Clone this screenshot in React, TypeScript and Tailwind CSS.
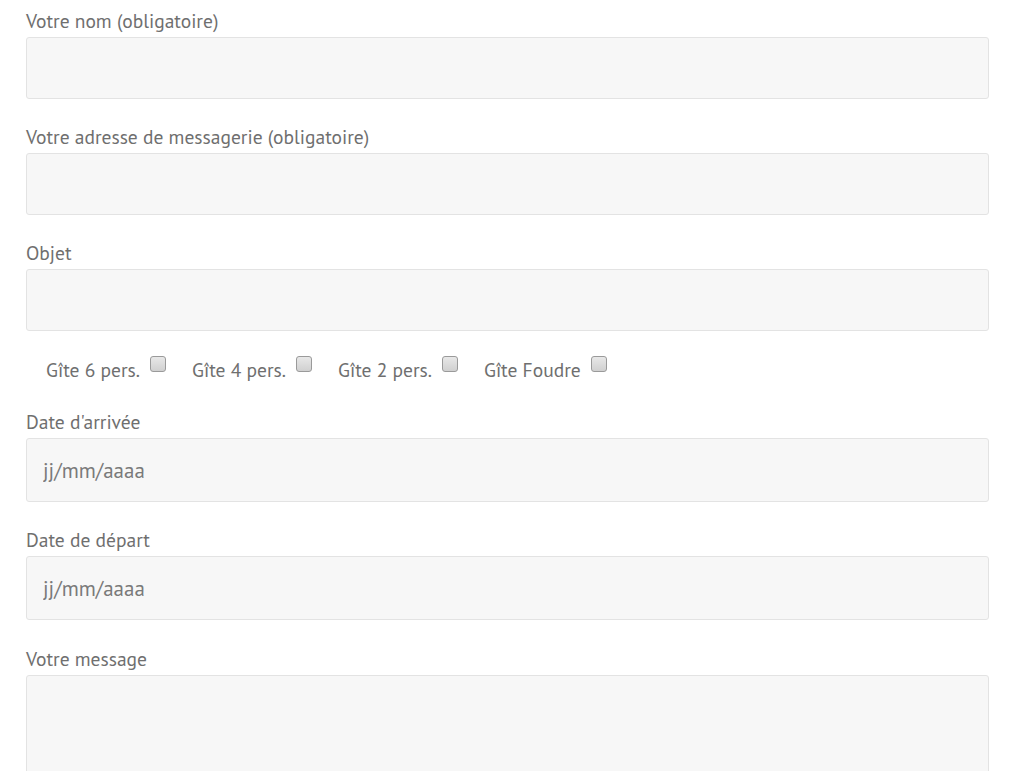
import React from "react";

const font = { fontFamily: '"PT Sans", "Open Sans", "Liberation Sans", sans-serif' };

function Field({ label, placeholder, tall }: { label: string; placeholder?: string; tall?: boolean }) {
	return (
		<div className="flex flex-col">
			<label className="text-[19.5px] leading-[24px] text-[#6f6f6f]">{label}</label>
			{tall ? (
				<textarea className="mt-[4px] h-[200px] w-full resize-none rounded-[3px] border border-[#e3e3e3] bg-[#f7f7f7] outline-none" />
			) : placeholder ? (
				<input
					placeholder={placeholder}
					className="mt-[4px] h-[64px] w-full rounded-[3px] border border-[#e3e3e3] bg-[#f7f7f7] px-[16px] text-[21px] text-[#6f6f6f] outline-none placeholder:text-[#7a7a7a]"
				/>
			) : (
				<input className="mt-[4px] h-[62px] w-full rounded-[3px] border border-[#e3e3e3] bg-[#f7f7f7] outline-none" />
			)}
		</div>
	);
}

function Check({ label }: { label: string }) {
	return (
		<label className="flex items-start gap-[10px]">
			<span className="text-[19.5px] leading-[24px] text-[#6f6f6f]">{label}</span>
			<span className="mt-[-2px] h-[16px] w-[16px] rounded-[3px] border border-[#9a9a9a] bg-gradient-to-b from-[#e8e8e8] to-[#d0d0d0]" />
		</label>
	);
}

export default function App() {
	return (
		<div className="min-h-[771px] bg-white px-[26px] pt-[9px]" style={font}>
			<div className="w-[963px] flex flex-col">
				<Field label="Votre nom (obligatoire)" />
				<div className="h-[26px]" />
				<Field label="Votre adresse de messagerie (obligatoire)" />
				<div className="h-[26px]" />
				<Field label="Objet" />
				<div className="flex gap-[26px] pl-[20px] pt-[27px]">
					<Check label="Gîte 6 pers." />
					<Check label="Gîte 4 pers." />
					<Check label="Gîte 2 pers." />
					<Check label="Gîte Foudre" />
				</div>
				<div className="h-[28px]" />
				<Field label="Date d'arrivée" placeholder="jj/mm/aaaa" />
				<div className="h-[26px]" />
				<Field label="Date de départ" placeholder="jj/mm/aaaa" />
				<div className="h-[27px]" />
				<Field label="Votre message" tall />
			</div>
		</div>
	);
}
